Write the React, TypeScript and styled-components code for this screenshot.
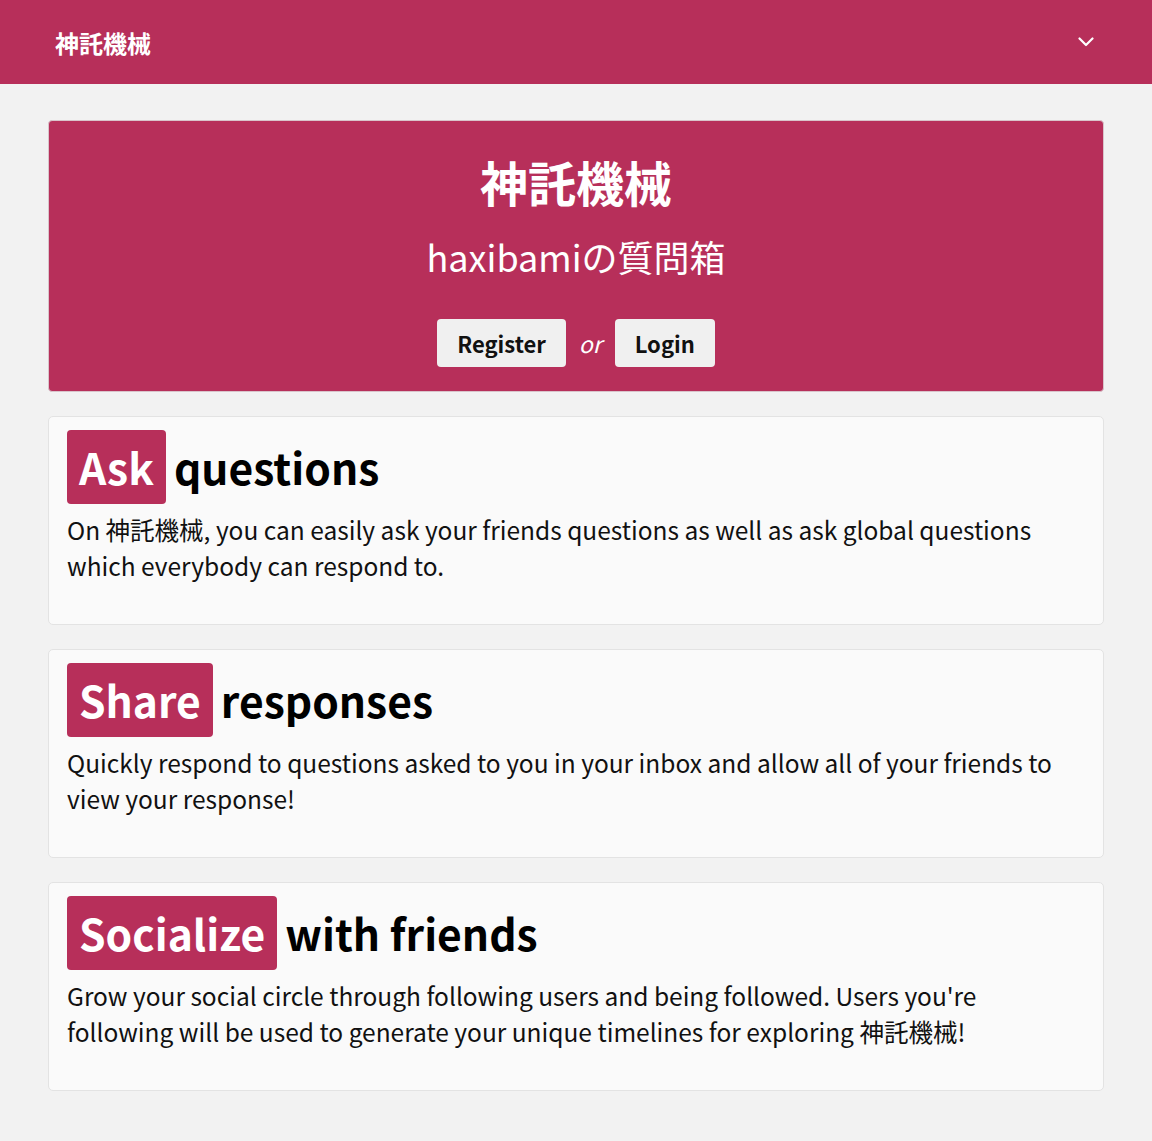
import React from "react";
import styled, { createGlobalStyle } from "styled-components";

const PRIMARY = "#b72f5a";
const FONT = `"Noto Sans CJK JP", "Noto Sans", sans-serif`;

const Global = createGlobalStyle`
  html, body { margin: 0; padding: 0; background: #f2f2f2; }
  body { font-family: ${FONT}; color: #111; }
  * { box-sizing: border-box; }
`;

const Navbar = styled.header`
  height: 84px;
  background: ${PRIMARY};
  display: flex;
  align-items: center;
  justify-content: space-between;
  padding: 0 58px 0 55px;
`;

const Brand = styled.div`
  color: #fff;
  font-size: 24px;
  font-weight: 700;
  line-height: 1;
  padding-top: 2px;
`;

const Toggle = styled.button`
  background: none;
  border: 0;
  padding: 0;
  display: flex;
  cursor: pointer;
`;

const Main = styled.main`
  padding: 36px 48px 50px;
  display: flex;
  flex-direction: column;
  gap: 24px;
`;

const Hero = styled.section`
  background: ${PRIMARY};
  border: 1px solid #d9c4cb;
  border-radius: 4px;
  color: #fff;
  text-align: center;
  padding: 31px 24px 24px;
  display: flex;
  flex-direction: column;
  align-items: center;
`;

const HeroTitle = styled.h1`
  margin: 0;
  font-size: 48px;
  font-weight: 700;
  line-height: 58px;
`;

const HeroSubtitle = styled.p`
  margin: 22px 0 0;
  font-size: 36px;
  font-weight: 400;
  line-height: 48px;
`;

const Actions = styled.div`
  margin-top: 39px;
  display: flex;
  align-items: center;
  gap: 12px;
`;

const Button = styled.button`
  height: 48px;
  padding: 0 20px;
  border: 0;
  border-radius: 4px;
  background: #f0f0f0;
  color: #111;
  font-family: ${FONT};
  font-size: 22px;
  font-weight: 700;
  cursor: pointer;
`;

const Or = styled.span`
  font-size: 23px;
  font-style: italic;
  color: #fff;
  padding: 0 1px;
`;

const Card = styled.section`
  background: #fafafa;
  border: 1px solid #e3e3e3;
  border-radius: 5px;
  padding: 13px 36px 16px 18px;
`;

const Heading = styled.h2`
  margin: 0;
  display: flex;
  align-items: center;
  gap: 8px;
  font-size: 42.6px;
  font-weight: 700;
  color: #000;
  line-height: 1;
`;

const Badge = styled.span`
  display: inline-flex;
  align-items: center;
  height: 74px;
  padding: 0 12px;
  background: ${PRIMARY};
  color: #fff;
  border-radius: 4px;
`;

const Body = styled.p`
  margin: 8px 0 24px;
  font-size: 24.5px;
  line-height: 36px;
  color: #111;
`;

const features = [
  {
    badge: "Ask",
    rest: "questions",
    text: "On 神託機械, you can easily ask your friends questions as well as ask global questions which everybody can respond to.",
  },
  {
    badge: "Share",
    rest: "responses",
    text: "Quickly respond to questions asked to you in your inbox and allow all of your friends to view your response!",
  },
  {
    badge: "Socialize",
    rest: "with friends",
    text: "Grow your social circle through following users and being followed. Users you're following will be used to generate your unique timelines for exploring 神託機械!",
  },
];

export default function App() {
  return (
    <>
      <Global />
      <Navbar>
        <Brand>神託機械</Brand>
        <Toggle aria-label="menu">
          <svg width="16" height="10" viewBox="0 0 16 10" fill="none">
            <path d="M1.5 1.5 L8 8 L14.5 1.5" stroke="#fff" strokeWidth="2.2" strokeLinecap="round" strokeLinejoin="round" />
          </svg>
        </Toggle>
      </Navbar>
      <Main>
        <Hero>
          <HeroTitle>神託機械</HeroTitle>
          <HeroSubtitle>haxibamiの質問箱</HeroSubtitle>
          <Actions>
            <Button>Register</Button>
            <Or>or</Or>
            <Button>Login</Button>
          </Actions>
        </Hero>
        {features.map((f) => (
          <Card key={f.badge}>
            <Heading>
              <Badge>{f.badge}</Badge>
              <span>{f.rest}</span>
            </Heading>
            <Body>{f.text}</Body>
          </Card>
        ))}
      </Main>
    </>
  );
}
